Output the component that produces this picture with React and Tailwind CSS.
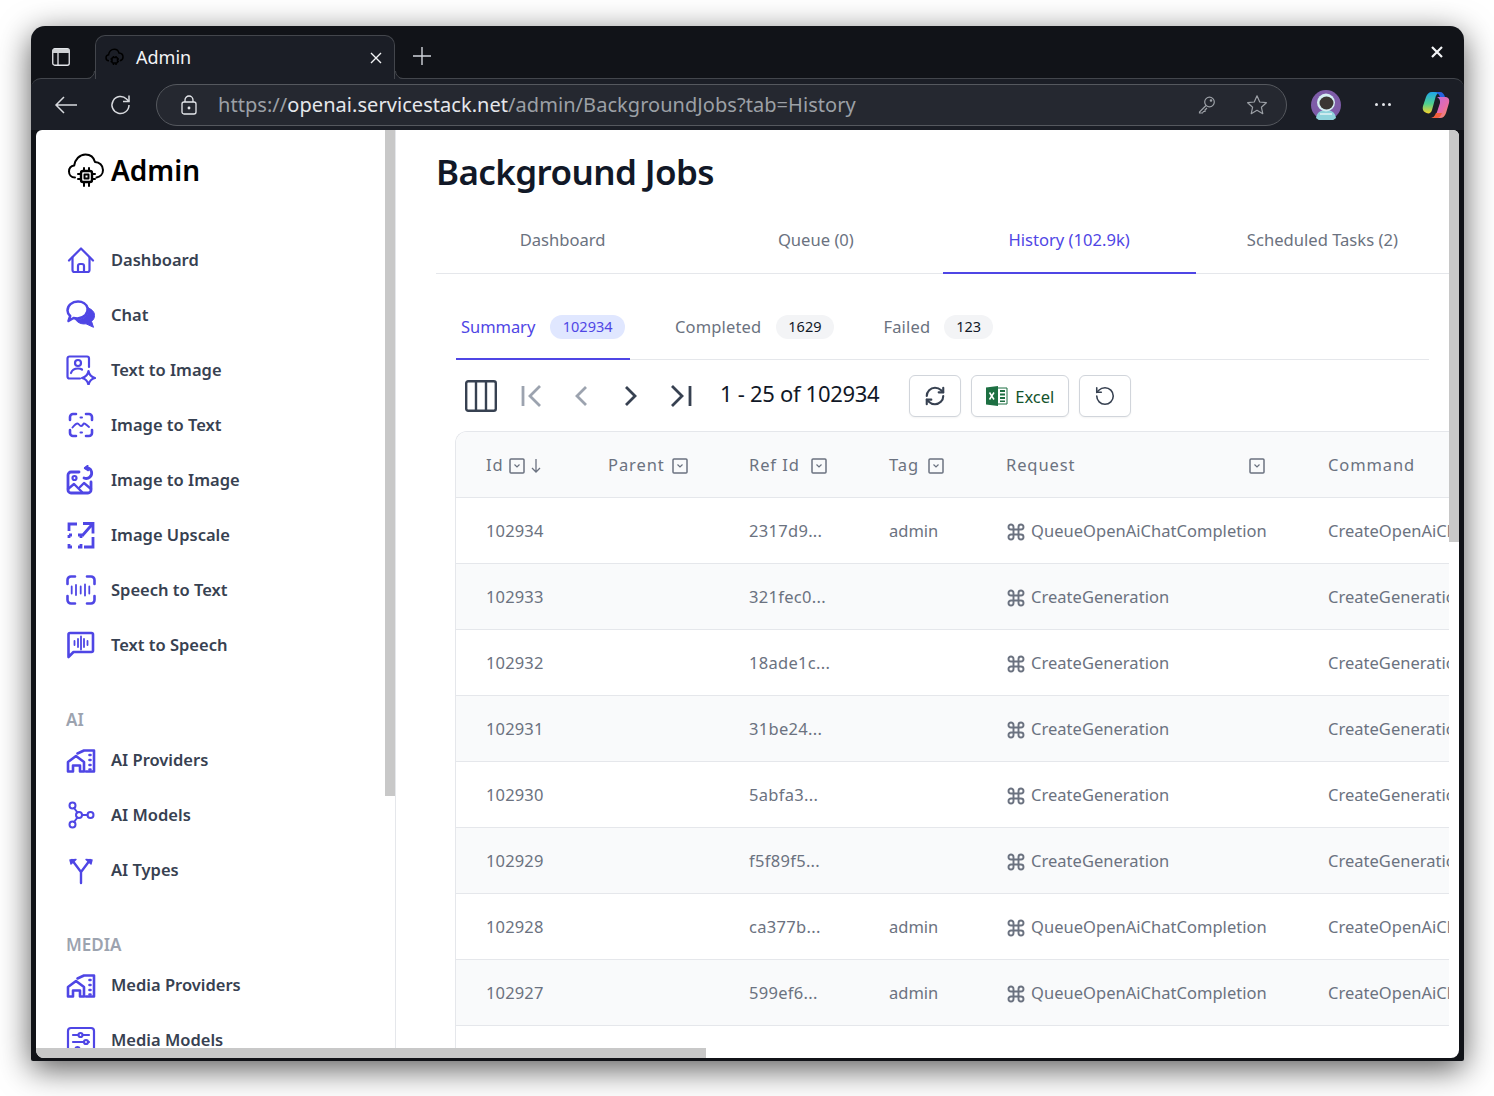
import React from "react";

const Ic = ({ children, cls = "", sw = 2.2 }) => (
  <svg width={30} height={30} viewBox="0 0 30 30" fill="none" stroke="currentColor" strokeWidth={sw} strokeLinecap="round" strokeLinejoin="round" className={`shrink-0 text-[#4f46e5] ${cls}`}>{children}</svg>
);

const Home = () => <Ic><path d="M3 15.500 15 3.500l12 12" /><path d="M6.500 12.500V25a2 2 0 0 0 2 2h13a2 2 0 0 0 2-2V12.500" /><path d="M12 27v-6a2 2 0 0 1 2-2h2a2 2 0 0 1 2 2v6" /></Ic>;
const Chat = () => <Ic sw={2.500}><path d="M1.500 10.500C1.500 5.500 6 1.500 12 1.500c4.500 0 8.500 2.500 9.500 6.500 1 5.500-3.500 10-10 10.500-1.500 0-3-.2-4-.5L2.500 21l1.700-5C2.500 14.500 1.500 12.500 1.500 10.500Z" /><path fill="currentColor" strokeWidth="1" d="M22 8c3.500 1 6.500 3.500 6.500 7.500 0 2.500-1 4.300-3 5.800l2 6-7.500-3.500c-3.500.5-6.500-.3-9-2.500-.8-.5-1.500-2-1.500-2 7.500 1 14.500-3.500 12.500-11.800Z" /></Ic>;
const TextImg = () => <Ic><path d="M14 23.500H3.500a2 2 0 0 1-2-2V3.500a2 2 0 0 1 2-2h17.500a2 2 0 0 1 2 2V12" /><circle cx="12" cy="8" r="3" /><path d="M5 18c1-3 3.500-4.500 7-4.500 1.500 0 3 .3 4 1" /><path d="M22.500 16c.7 3.700 3 6.200 6.500 7-3.500 .8-5.800 3.300-6.500 7-.7-3.700-3-6.200-6.500-7 3.500-.8 5.800-3.300 6.500-7Z" /></Ic>;
const ImgText = () => <Ic sw={2.600}><path d="M4 10V7a3 3 0 0 1 3-3h3M20 4h3a3 3 0 0 1 3 3v3M26 20v3a3 3 0 0 1-3 3h-3M10 26H7a3 3 0 0 1-3-3v-3" /><path d="M6.500 17.500c2-2.500 3.500-4 5-4s2 2.500 3.500 2.500 2-2 3-2.500 2.500 1.500 5 3.500" strokeWidth="2" /><path d="M14.500 7.500h1.500M14.500 22.500h1.500" strokeWidth="2" /></Ic>;
const ImgImg = () => <Ic sw={2.800}><path d="M13 7H5a3 3 0 0 0-3 3v15a3 3 0 0 0 3 3h17a3 3 0 0 0 3-3v-8" /><circle cx="8.500" cy="13" r="2" strokeWidth="2.200" /><path d="M2 24l6-5 8 8M14 22l4-4 7 6" strokeWidth="2.400" /><path d="M18 13a5.500 5.500 0 0 0 7.500-6.500 5 5 0 0 0-6-3.500" /><path d="M21.500 1 19 3.200l3 2" strokeWidth="2.200" /></Ic>;
const Upscale = () => <Ic sw={2.800} ><path d="M3 11V4h8M17 3.500h10v10M26.500 4 16 16M27 17v10h-9" strokeLinecap="butt" strokeLinejoin="miter" /><path d="M3 15h3M3 15v3M3 24v3h3M12 15h3v3M15 24v3h-3" strokeLinecap="butt" strokeLinejoin="miter" /></Ic>;
const Speech = () => <Ic sw={2.600}><path d="M1.500 9V5A3.500 3.500 0 0 1 5 1.500h4M21 1.500h4A3.500 3.500 0 0 1 28.500 5v4M28.500 21v4a3.500 3.500 0 0 1-3.500 3.500h-4M9 28.500H5A3.500 3.500 0 0 1 1.500 25v-4" /><path d="M5.700 11.500v7M10 10v10M14.700 11.500v7M19 9.500v11M23.300 11.500v7" strokeWidth="1.800" /></Ic>;
const TtS = () => <Ic sw={2.600}><path d="M2.500 27V4.500a1.500 1.500 0 0 1 1.500-1.500h21.500A1.500 1.500 0 0 1 27 4.500v16a1.500 1.500 0 0 1-1.500 1.500H7.500l-5 5Z" /><path d="M8.500 11v4M12 9v8M15 6.500v13M18 9v8M21.500 11v4" strokeWidth="1.800" /></Ic>;
const Provider = () => <Ic sw={2.600}><path d="M2 17 10 11l8 6v9.500h-4V20.500H7v6H2V17Z" /><path d="M11.500 8.500 18 5.500h10v21h-8" /><path d="M23.500 10h1M23.500 15h1M23.500 20h1M23.500 24.500h1" strokeWidth="2.600" /></Ic>;
const Models = () => <Ic sw={2}><circle cx="6.500" cy="5.500" r="3" /><circle cx="6.500" cy="24.500" r="3" /><circle cx="13" cy="15" r="3" /><circle cx="24.500" cy="15" r="3" /><path d="m8 8 3.500 4.500M11.500 17.500 8 22M16 15h5.500" /></Ic>;
const Types = () => <Ic sw={2.400}><path d="M15 28V17L6 5M15 17l9-12" /><path fill="currentColor" d="m4 5 6-.5L5 9ZM26 5l-6-.5L25 9Z" strokeWidth="1.400" /></Ic>;
const MediaM = () => <Ic sw={2.200}><rect x="2" y="3" width="26" height="30" rx="3" /><path d="M7 10h5M17 10h6M7 17h11M22 17h1M7 24h2M14 24h9" /><circle cx="14.500" cy="10" r="2" /><circle cx="20" cy="17" r="2" /><circle cx="11.500" cy="24" r="2" /></Ic>;

const Logo = () => (
  <svg width="38" height="38" viewBox="0 0 38 38" fill="none" stroke="#000" strokeWidth="2" strokeLinecap="round" strokeLinejoin="round">
    <path d="M8 25.500C4 25.500 2 22.500 2 19.500c0-3.200 2.200-5.600 5.200-6C8 7.500 12.500 2.500 18.500 2.500c4.800 0 8.300 3 9.500 7.500 4.300 .2 8 3.200 8 8 0 4.200-3 7-6.500 7.500" />
    <rect x="14" y="19" width="11" height="11" rx="2" strokeWidth="2.400" />
    <path d="M17 16v3M22 16v3M17 30v4M22 30v4M11 22h3M11 27h3M25 22h3M25 27h3" />
    <rect x="17.500" y="22.500" width="4" height="4" />
  </svg>
);

const NavItem = ({ icon, label }) => (
  <div className="flex h-[55px] items-center gap-[15px]">
    {icon}
    <span className="text-[16.500px] font-semibold leading-none text-[#374151]">{label}</span>
  </div>
);

const NavLabel = ({ children, cls }) => <div className={`${cls} h-[25px] text-[17px] font-semibold leading-6 text-[#9ca3af]`}>{children}</div>;

const Filter = ({ cls = "" }) => (
  <svg width="16" height="16" viewBox="0 0 16 16" fill="none" className={cls}>
    <rect x="1" y="1" width="14" height="14" rx="1" stroke="#6b7280" strokeWidth="1.500" />
    <path d="m5.500 6.500 2.500 2.500 2.500-2.500" stroke="#6b7280" strokeWidth="1.200" />
  </svg>
);

const Cmd = () => (
  <svg width="20" height="20" viewBox="0 0 24 24" fill="none" stroke="#6b7280" strokeWidth="2.300" className="shrink-0">
    <path d="M15 6v12a3 3 0 1 0 3-3H6a3 3 0 1 0 3 3V6a3 3 0 1 0-3 3h12a3 3 0 1 0-3-3" />
  </svg>
);

const rows = [
  ["102934", "2317d9...", "admin", "QueueOpenAiChatCompletion", "CreateOpenAiChatCompletion"],
  ["102933", "321fec0...", "", "CreateGeneration", "CreateGeneration"],
  ["102932", "18ade1c...", "", "CreateGeneration", "CreateGeneration"],
  ["102931", "31be24...", "", "CreateGeneration", "CreateGeneration"],
  ["102930", "5abfa3...", "", "CreateGeneration", "CreateGeneration"],
  ["102929", "f5f89f5...", "", "CreateGeneration", "CreateGeneration"],
  ["102928", "ca377b...", "admin", "QueueOpenAiChatCompletion", "CreateOpenAiChatCompletion"],
  ["102927", "599ef6...", "admin", "QueueOpenAiChatCompletion", "CreateOpenAiChatCompletion"],
];

const gridCols = "grid grid-cols-[122px_141px_140px_117px_322px_300px]";
const cellText = "pl-[30px] pt-[2px] text-[16.500px] text-[#6b7280] whitespace-nowrap overflow-hidden";

const PBtn = ({ children, w }) => (
  <button className={`flex h-[42px] ${w} items-center justify-center gap-[7px] rounded-md border border-[#d1d5db] bg-white shadow-xs`}>{children}</button>
);

export default function App() {
  return (
    <div className="h-[1096px] w-[1494px] overflow-hidden bg-white pl-[31px] pt-[26px]" style={{ fontFamily: '"Noto Sans", sans-serif' }}>
      <div className="flex h-[1035px] w-[1433px] flex-col rounded-t-[14px] rounded-b-[2px] bg-[#111318] shadow-[0_8px_32px_rgba(0,0,0,0.65)]">
        {/* title bar */}
        <div className="relative flex h-[52px] items-end pl-[21px]">
          <svg width="18" height="18" viewBox="0 0 18 18" fill="none" className="mb-[12px] mr-[25px]">
            <rect x=".75" y=".75" width="16.500" height="16.500" rx="2" stroke="#e5e7eb" strokeWidth="1.300" />
            <path d="M1 1h16v4H1z" fill="#cfd1d4" />
            <path d="M6 5v12" stroke="#e5e7eb" strokeWidth="1.300" />
          </svg>
          <div className="relative z-10 -mb-px flex h-[44px] w-[300px] items-center rounded-t-[10px] border border-b-0 border-[#43464c] bg-[#1b1e26] pl-[9px] pr-[12px]">
            <svg width="8" height="8" viewBox="0 0 8 8" fill="none" className="absolute -left-[9px] bottom-0">
              <path d="M8 0A8 8 0 0 1 0 8H8Z" fill="#1b1e26" />
              <path d="M7.500 0A7.500 7.500 0 0 1 0 7.500" stroke="#43464c" />
            </svg>
            <svg width="8" height="8" viewBox="0 0 8 8" fill="none" className="absolute -right-[9px] bottom-0">
              <path d="M0 0A8 8 0 0 0 8 8H0Z" fill="#1b1e26" />
              <path d="M.5 0A7.500 7.500 0 0 0 8 7.500" stroke="#43464c" />
            </svg>
            <svg width="19" height="19" viewBox="0 0 38 38" fill="none" stroke="#000" strokeWidth="3">
              <path d="M8 25.500C4 25.500 2 22.500 2 19.500c0-3.200 2.200-5.600 5.200-6C8 7.500 12.500 2.500 18.500 2.500c4.800 0 8.300 3 9.500 7.500 4.300 .2 8 3.200 8 8 0 4.200-3 7-6.500 7.500" />
              <rect x="14" y="19" width="11" height="11" rx="2" />
              <path d="M17 16v3M22 16v3M17 30v4M22 30v4M11 22h3M11 27h3M25 22h3M25 27h3" />
            </svg>
            <span className="ml-[12px] mb-[2px] flex-1 text-[18px] leading-none text-[#f3f4f6]">Admin</span>
            <svg width="12" height="12" viewBox="0 0 12 12" stroke="#f3f4f6" strokeWidth="1.400"><path d="m1 1 10 10M11 1 1 11" /></svg>
          </div>
          <svg width="18" height="18" viewBox="0 0 18 18" stroke="#d1d5db" strokeWidth="1.400" className="mb-[13px] ml-[18px]"><path d="M9 0v18M0 9h18" /></svg>
          <svg width="12" height="12" viewBox="0 0 12 12" stroke="#f3f4f6" strokeWidth="2.200" className="absolute right-[21px] top-[20px]"><path d="m1 1 10 10M11 1 1 11" /></svg>
        </div>
        {/* toolbar */}
        <div className="flex h-[52px] items-center rounded-t-[10px] border-t border-[#43464c] bg-[#1b1e26] pl-[23px]">
          <svg width="24" height="20" viewBox="0 0 24 20" fill="none" stroke="#d8dade" strokeWidth="1.500"><path d="M23 10H2M10 2 2 10l8 8" /></svg>
          <svg width="22" height="22" viewBox="0 0 22 22" fill="none" stroke="#d8dade" strokeWidth="1.500" className="ml-[32px]"><path d="M19 11a8.500 8.500 0 1 1-2.500-6L19 7.500" /><path d="M19 1.500v6h-6" /></svg>
          <div className="ml-[24px] flex h-[42px] w-[1131px] items-center rounded-full border border-[#55585e] bg-[#252830] pl-[24px]">
            <svg width="16" height="20" viewBox="0 0 16 20" fill="none" stroke="#e5e7eb" strokeWidth="1.300"><rect x="1" y="7" width="14" height="12" rx="2" /><path d="M4 7V5a4 4 0 0 1 8 0v2" /><circle cx="8" cy="13" r=".8" fill="#e5e7eb" /></svg>
            <div className="ml-[21px] flex-1 whitespace-nowrap text-[20px] leading-none tracking-[0.05px] text-[#9ca0a6]">
              https://<span className="text-[#e5e7eb]">openai.servicestack.net</span>/admin/BackgroundJobs?tab=History
            </div>
            <svg width="18" height="18" viewBox="0 0 18 18" fill="none" stroke="#9ca0a6" strokeWidth="1.200" className="mr-[30px]"><circle cx="11.500" cy="6" r="4.800" /><path d="M8 9.500 1.500 16v1h3l1-1.500h1.500V14l2-2" /><circle cx="13" cy="4.500" r=".7" /></svg>
            <svg width="22" height="22" viewBox="0 0 24 24" fill="none" stroke="#9ca0a6" strokeWidth="1.300" strokeLinejoin="round" className="mr-[18px]"><path d="m12 2 3 6.700 7.200.8-5.400 4.900 1.500 7.100L12 17.800l-6.300 3.700 1.500-7.100L1.800 9.500 9 8.700 12 2Z" /></svg>
          </div>
          <svg width="30" height="30" viewBox="0 0 30 30" className="ml-[24px]">
            <circle cx="15" cy="15" r="15" fill="#7e5ca8" />
            <path d="M5 28c1-6 5-8 10-8s9 2 10 8a15 15 0 0 1-20 0Z" fill="#8fd3dc" />
            <circle cx="15" cy="12.500" r="9" fill="#d5eef2" />
            <ellipse cx="15.500" cy="13" rx="7" ry="6.500" fill="#3a3633" />
            <path d="M9 23h12v2H9z" fill="#cdebef" />
          </svg>
          <div className="ml-[34px] flex w-[16px] justify-between">
            <span className="size-[3px] rounded-full bg-[#e5e7eb]" />
            <span className="size-[3px] rounded-full bg-[#e5e7eb]" />
            <span className="size-[3px] rounded-full bg-[#e5e7eb]" />
          </div>
          <svg width="28" height="28" viewBox="0 0 28 28" className="ml-[31px]">
            <defs>
              <linearGradient id="cp1" x1="0" y1="0" x2="0" y2="1"><stop offset="0" stopColor="#1fa5e8" /><stop offset=".55" stopColor="#4fd08f" /><stop offset="1" stopColor="#f6d22c" /></linearGradient>
              <linearGradient id="cp2" x1="0" y1="0" x2="1" y2="1"><stop offset="0" stopColor="#b76be8" /><stop offset=".6" stopColor="#e86ba8" /><stop offset="1" stopColor="#ff9a3c" /></linearGradient>
            </defs>
            <path d="M10 1h8c-3 1-4 3-5 7l-3 11c-.8 3-3 4-5.500 3C2 21 0 19 1 15l3-9c1-3 3-5 6-5Z" fill="url(#cp1)" />
            <path d="M15 6h8c3 0 5 2 4 6l-3 10c-1 3-3 5-6 5h-8c3-1 4-3 5-6l3-9c.5-3-1-5-3-6Z" fill="url(#cp2)" />
            <path d="M18 1h-6c3 0 5 2 6 5h5c-.8-3-2.500-5-5-5Z" fill="#2463e0" />
            <path d="M8 27h7c2 0 4-2 5-5h-6c-1 3-3 5-6 5Z" fill="#f0603c" />
          </svg>
        </div>
        {/* content */}
        <div className="relative ml-[5px] flex h-[928px] w-[1423px] overflow-hidden rounded-b-lg rounded-t-md bg-white">
          <aside className="h-[918px] w-[360px] shrink-0 overflow-hidden border-r border-[#e5e7eb] pl-[30px]">
            <div className="ml-[1px] flex h-[102.500px] items-start gap-[6px] pt-[22px]">
              <Logo />
              <span className="text-[28px] font-semibold leading-[36px] text-black">Admin</span>
            </div>
            <NavItem icon={<Home />} label="Dashboard" />
            <NavItem icon={<Chat />} label="Chat" />
            <NavItem icon={<TextImg />} label="Text to Image" />
            <NavItem icon={<ImgText />} label="Image to Text" />
            <NavItem icon={<ImgImg />} label="Image to Image" />
            <NavItem icon={<Upscale />} label="Image Upscale" />
            <NavItem icon={<Speech />} label="Speech to Text" />
            <NavItem icon={<TtS />} label="Text to Speech" />
            <NavLabel cls="mt-[35px]">AI</NavLabel>
            <NavItem icon={<Provider />} label="AI Providers" />
            <NavItem icon={<Models />} label="AI Models" />
            <NavItem icon={<Types />} label="AI Types" />
            <NavLabel cls="mt-[35px]">MEDIA</NavLabel>
            <NavItem icon={<Provider />} label="Media Providers" />
            <NavItem icon={<MediaM />} label="Media Models" />
          </aside>
          <main className="h-[918px] w-[1053px] shrink-0 overflow-hidden">
            <h1 className="pl-[40px] pt-[20px] pb-[1px] text-[35px] font-semibold leading-[44px] tracking-[-0.6px] text-[#111827]">Background Jobs</h1>
            <div className="ml-[40px] mt-[22px] grid h-[57px] grid-cols-4 border-b border-[#e5e7eb] text-[16.600px] text-[#6b7280]">
              <div className="flex items-center justify-center pb-[10px]">Dashboard</div>
              <div className="flex items-center justify-center pb-[10px]">Queue (0)</div>
              <div className="-mb-px flex items-center justify-center border-b-2 border-[#4f46e5] pb-[9px] text-[#4f46e5]">History (102.9k)</div>
              <div className="flex items-center justify-center pb-[10px]">Scheduled Tasks (2)</div>
            </div>
            <div className="ml-[60px] mr-[20px] mt-[26px] flex h-[60px] gap-[40px] border-b border-[#e5e7eb] text-[16.500px] tracking-[0.15px]">
              <div className="-mb-px flex w-[174px] items-start gap-[15px] border-b-2 border-[#4f46e5] pl-[5px] pt-[15px] text-[#4f46e5]">
                <span className="leading-6 tracking-[-0.05px]">Summary</span>
                <span className="h-6 rounded-full bg-[#e0e7ff] px-[12.500px] text-[14.500px] leading-[22px] tracking-normal">102934</span>
              </div>
              <div className="flex items-start gap-[15px] pl-[5px] pt-[15px] text-[#6b7280]">
                <span className="leading-6">Completed</span>
                <span className="h-6 rounded-full bg-[#f3f4f6] px-[12px] text-[14.500px] leading-[22px] tracking-normal text-[#111827]">1629</span>
              </div>
              <div className="ml-[5px] flex items-start gap-[14px] pl-[5px] pt-[15px] text-[#6b7280]">
                <span className="leading-6">Failed</span>
                <span className="h-6 rounded-full bg-[#f3f4f6] px-[12px] text-[14.500px] leading-[22px] tracking-normal text-[#111827]">123</span>
              </div>
            </div>
            <div className="ml-[69px] mt-[15px] flex h-[42px] items-center">
              <svg width="32" height="32" viewBox="0 0 32 32" fill="none" stroke="#374151" strokeWidth="2.400"><rect x="1.200" y="1.200" width="29.600" height="29.600" rx="2" /><path d="M11 1v30M21 1v30" /></svg>
              <svg width="24" height="24" viewBox="0 0 24 24" fill="none" stroke="#9ca3af" strokeWidth="2.800" className="ml-[23px]"><path d="M3 2v20M20 2 10 12l10 10" /></svg>
              <svg width="14" height="24" viewBox="0 0 14 24" fill="none" stroke="#9ca3af" strokeWidth="2.800" className="ml-[30px]"><path d="M12 3 3 12l9 9" /></svg>
              <svg width="14" height="24" viewBox="0 0 14 24" fill="none" stroke="#374151" strokeWidth="2.800" className="ml-[36px]"><path d="m2 3 9 9-9 9" /></svg>
              <svg width="24" height="24" viewBox="0 0 24 24" fill="none" stroke="#374151" strokeWidth="2.800" className="ml-[31px]"><path d="M21 2v20M3 2l10 10L3 22" /></svg>
              <span className="ml-[27px] mr-[30px] mb-[6px] whitespace-nowrap text-[22px] leading-none tracking-[-0.3px] text-[#111827]">1 - 25 of 102934</span>
              <PBtn w="w-[52px]">
                <svg width="22" height="22" viewBox="0 0 24 24" fill="none" stroke="#374151" strokeWidth="2.300" strokeLinecap="round" strokeLinejoin="round"><path d="M3 12a9 9 0 0 1 9-9 9.750 9.750 0 0 1 6.740 2.740L21 8" /><path d="M21 3v5h-5" /><path d="M21 12a9 9 0 0 1-9 9 9.750 9.750 0 0 1-6.740-2.740L3 16" /><path d="M8 16H3v5" /></svg>
              </PBtn>
              <div className="w-[10px]" />
              <PBtn w="w-[98px]">
                <svg width="22" height="22" viewBox="0 0 22 22">
                  <path d="M8 3h13v16H8z" fill="#fff" stroke="#1d6f42" strokeWidth="1" />
                  <path d="M14 5h5v2h-5zM14 8.500h5v2h-5zM14 12h5v2h-5zM14 15.500h5v1.500h-5z" fill="#1d6f42" />
                  <path d="M0 2.500 12 1v20L0 19.500z" fill="#1d6f42" />
                  <path d="m3.500 7.500 4.500 7M8 7.500l-4.500 7" stroke="#fff" strokeWidth="1.500" />
                </svg>
                <span className="pt-[2px] text-[16.500px] leading-none text-[#14532d]">Excel</span>
              </PBtn>
              <div className="w-[10px]" />
              <PBtn w="w-[52px]">
                <svg width="22" height="22" viewBox="0 0 24 24" fill="none" stroke="#374151" strokeWidth="1.700" strokeLinecap="round" strokeLinejoin="round"><path d="M3 12a9 9 0 1 0 9-9 9.750 9.750 0 0 0-6.740 2.740L3 8" /><path d="M3 3v5h5" /></svg>
              </PBtn>
            </div>
            <div className="ml-[59px] mt-[14px] w-[1200px] overflow-hidden rounded-tl-xl border-l border-t border-[#e5e7eb]">
              <div className={`${gridCols} h-[66px] items-center border-b border-[#e5e7eb] bg-[#f9fafb]`}>
                {[
                  ["Id", "ml-[5px]"],
                  ["Parent", "ml-[7px]"],
                  ["Ref Id", "ml-[11px]"],
                  ["Tag", "ml-[9px]"],
                  ["Request", "ml-[174px]"],
                  ["Command", ""],
                ].map(([h, m], i) => (
                  <div key={h} className="flex items-center whitespace-nowrap pl-[30px] pt-[2px] text-[16.500px] tracking-[0.9px] text-[#6b7280]">
                    {h}
                    {i < 5 && <Filter cls={`${m} shrink-0`} />}
                    {i === 0 && (
                      <svg width="10" height="14" viewBox="0 0 10 14" fill="none" stroke="#6b7280" strokeWidth="1.300" className="ml-[6px]"><path d="M5 0v13M1 9l4 4 4-4" /></svg>
                    )}
                  </div>
                ))}
              </div>
              {rows.map((r, i) => (
                <div key={r[0]} className={`${gridCols} h-[66px] items-center border-b border-[#e5e7eb] ${i % 2 ? "bg-[#f9fafb]" : "bg-white"}`}>
                  <div className={`${cellText} tracking-[0.15px]`}>{r[0]}</div>
                  <div className={cellText} />
                  <div className={`${cellText} tracking-[0.3px]`}>{r[1]}</div>
                  <div className={cellText}>{r[2]}</div>
                  <div className={`${cellText} flex items-center gap-[5px] tracking-[0.03px] !overflow-visible`}><Cmd />{r[3]}</div>
                  <div className={`${cellText} tracking-[0.02px]`}>{r[4]}</div>
                </div>
              ))}
              <div className="h-[66px] bg-white" />
            </div>
          </main>
          {/* scrollbar thumbs */}
          <div className="absolute left-[349px] top-0 h-[666px] w-[10px] bg-[#c8c8c8]" />
          <div className="absolute right-0 top-0 h-[412px] w-[10px] bg-[#c8c8c8]" />
          <div className="absolute bottom-0 left-0 h-[10px] w-[670px] bg-[#c8c8c8]" />
        </div>
      </div>
    </div>
  );
}
